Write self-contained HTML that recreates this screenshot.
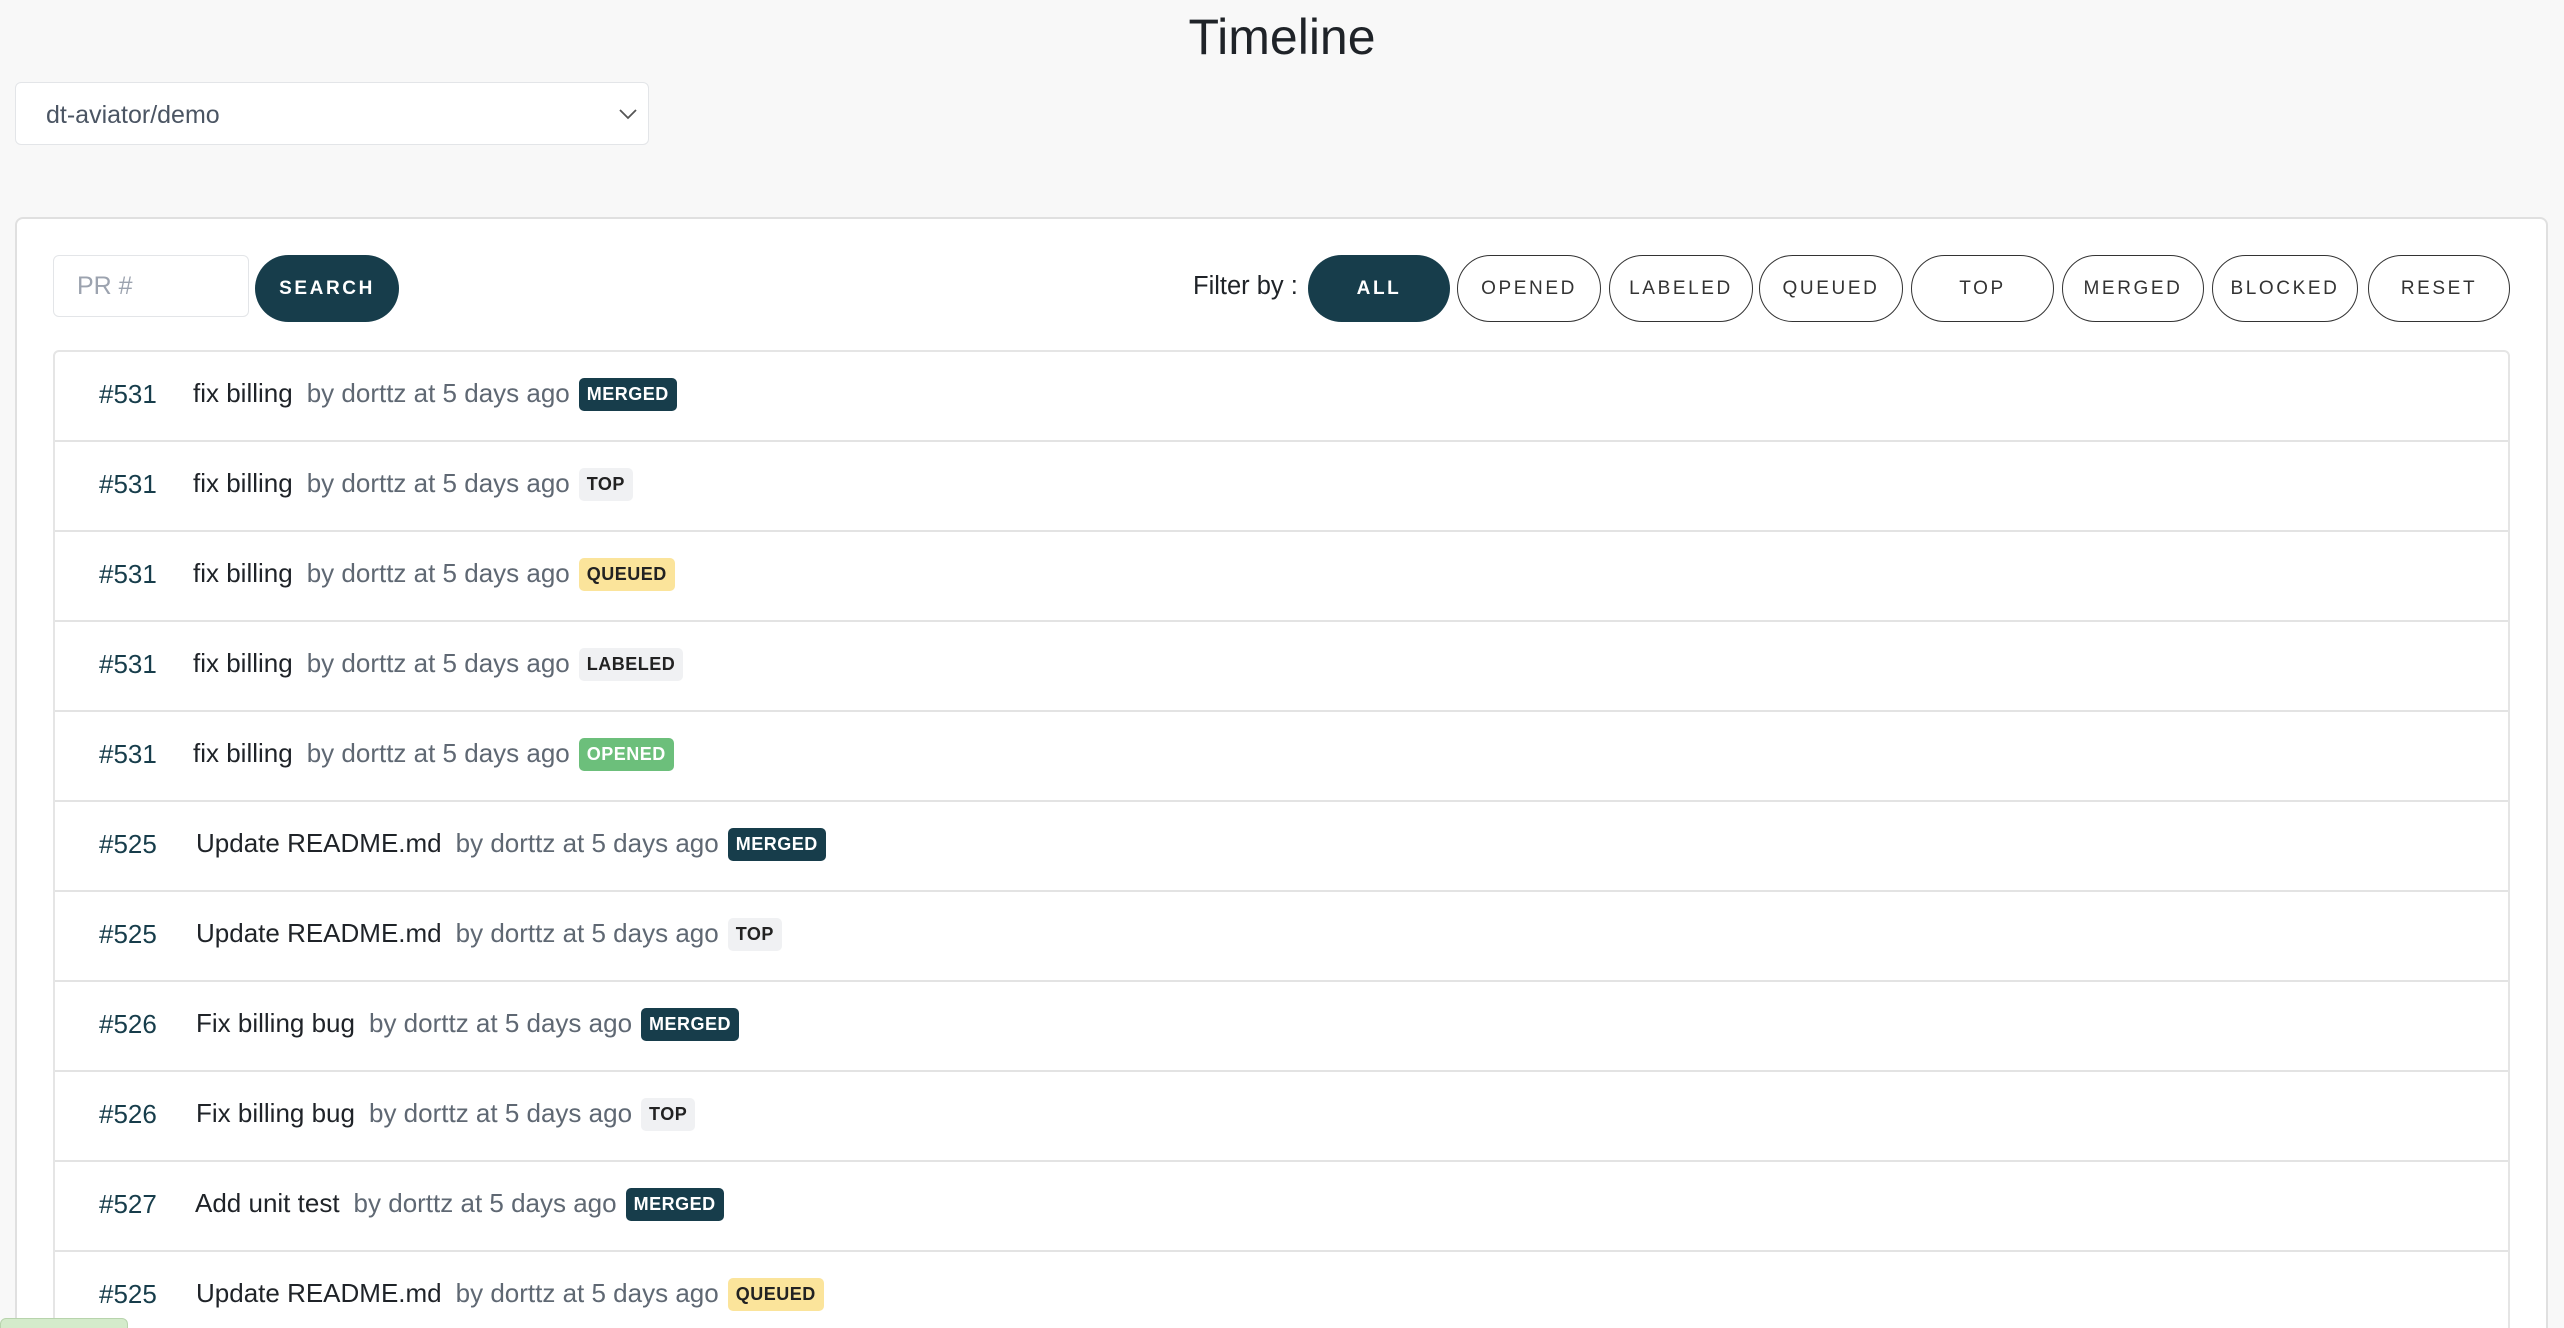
<!DOCTYPE html>
<html><head><meta charset="utf-8"><style>
*{box-sizing:border-box;margin:0;padding:0}
html,body{width:2564px;height:1328px;overflow:hidden}
body{background:#f8f8f8;font-family:"Liberation Sans",sans-serif;position:relative;color:#1f2328}
h1{position:absolute;top:8px;left:0;width:2564px;text-align:center;font-weight:400;font-size:50px;color:#1f2328}
.sel{position:absolute;left:15px;top:82px;width:634px;height:63px;background:#fff;border:1px solid #e3e5e8;border-radius:6px;font-size:25px;color:#4b5563;padding:18px 0 0 30px}
.sel svg{position:absolute;right:10px;top:24px}
.card{position:absolute;left:15px;top:217px;width:2533px;height:1120px;background:#fff;border:2px solid #e0e0e0;border-radius:8px}
.inp{position:absolute;left:53px;top:255px;width:196px;height:62px;border:1px solid #e3e5e8;border-radius:6px;font-size:25px;color:#9ca3af;padding:16px 0 0 23px}
.btn{position:absolute;top:255px;height:67px;border-radius:34px;font-size:19px;letter-spacing:2.6px;display:flex;align-items:center;justify-content:center;font-weight:700}
.dark{background:#173d4b;color:#fff}
.out{background:#fff;border:1.5px solid #333;color:#333;font-weight:400}
.flt{position:absolute;left:1193px;top:272px;font-size:25.5px;color:#1f2328}
.list{position:absolute;left:53px;top:350px;width:2457px;height:990px;border:2px solid #e5e5e5;border-radius:6px;background:#fff}
.row{height:90px;border-bottom:2px solid #e3e3e3;display:flex;align-items:center;font-size:26px;position:relative}
.row>span{margin-top:-4px}
.num{position:absolute;left:44px;color:#173d4b}
.t{color:#1f2328}.by{color:#5f6873;margin-left:14px}
.b{display:inline-block;margin-left:9px;font-size:18px;font-weight:700;padding:6px 8px;border-radius:5px;letter-spacing:.5px;vertical-align:2px}
.m{background:#173d4b;color:#fff}.tp{background:#f0f1f3;color:#222}.q{background:#fbe49b;color:#222}.l{background:#f0f1f3;color:#222}.o{background:#6cbf7b;color:#fff}
.green{position:absolute;left:0;top:1318px;width:128px;height:20px;background:#d4ebcb;border:1px solid #b8d4ad;border-radius:6px}
</style></head><body>
<h1>Timeline</h1>
<div class="sel">dt-aviator/demo<svg width="20" height="14" viewBox="0 0 20 14"><path d="M2 3 L10 11 L18 3" fill="none" stroke="#555" stroke-width="1.8"/></svg></div>
<div class="card"></div>
<div class="inp">PR #</div>
<div class="btn dark" style="left:255px;width:144px">SEARCH</div>
<div class="flt">Filter by :</div>
<div class="btn dark" style="left:1308px;width:142px">ALL</div>
<div class="btn out" style="left:1457px;width:144px">OPENED</div>
<div class="btn out" style="left:1609px;width:144px">LABELED</div>
<div class="btn out" style="left:1759px;width:144px">QUEUED</div>
<div class="btn out" style="left:1911px;width:143px">TOP</div>
<div class="btn out" style="left:2062px;width:142px">MERGED</div>
<div class="btn out" style="left:2212px;width:146px">BLOCKED</div>
<div class="btn out" style="left:2368px;width:142px">RESET</div>
<div class="list">
<div class="row"><span class="num">#531</span><span style="position:absolute;left:138px"><span class="t">fix billing</span><span class="by">by dorttz at 5 days ago</span><span class="b m">MERGED</span></span></div>
<div class="row"><span class="num">#531</span><span style="position:absolute;left:138px"><span class="t">fix billing</span><span class="by">by dorttz at 5 days ago</span><span class="b tp">TOP</span></span></div>
<div class="row"><span class="num">#531</span><span style="position:absolute;left:138px"><span class="t">fix billing</span><span class="by">by dorttz at 5 days ago</span><span class="b q">QUEUED</span></span></div>
<div class="row"><span class="num">#531</span><span style="position:absolute;left:138px"><span class="t">fix billing</span><span class="by">by dorttz at 5 days ago</span><span class="b l">LABELED</span></span></div>
<div class="row"><span class="num">#531</span><span style="position:absolute;left:138px"><span class="t">fix billing</span><span class="by">by dorttz at 5 days ago</span><span class="b o">OPENED</span></span></div>
<div class="row"><span class="num">#525</span><span style="position:absolute;left:141px"><span class="t">Update README.md</span><span class="by">by dorttz at 5 days ago</span><span class="b m">MERGED</span></span></div>
<div class="row"><span class="num">#525</span><span style="position:absolute;left:141px"><span class="t">Update README.md</span><span class="by">by dorttz at 5 days ago</span><span class="b tp">TOP</span></span></div>
<div class="row"><span class="num">#526</span><span style="position:absolute;left:141px"><span class="t">Fix billing bug</span><span class="by">by dorttz at 5 days ago</span><span class="b m">MERGED</span></span></div>
<div class="row"><span class="num">#526</span><span style="position:absolute;left:141px"><span class="t">Fix billing bug</span><span class="by">by dorttz at 5 days ago</span><span class="b tp">TOP</span></span></div>
<div class="row"><span class="num">#527</span><span style="position:absolute;left:140px"><span class="t">Add unit test</span><span class="by">by dorttz at 5 days ago</span><span class="b m">MERGED</span></span></div>
<div class="row"><span class="num">#525</span><span style="position:absolute;left:141px"><span class="t">Update README.md</span><span class="by">by dorttz at 5 days ago</span><span class="b q">QUEUED</span></span></div>
</div>
<div class="green"></div>
</body></html>
